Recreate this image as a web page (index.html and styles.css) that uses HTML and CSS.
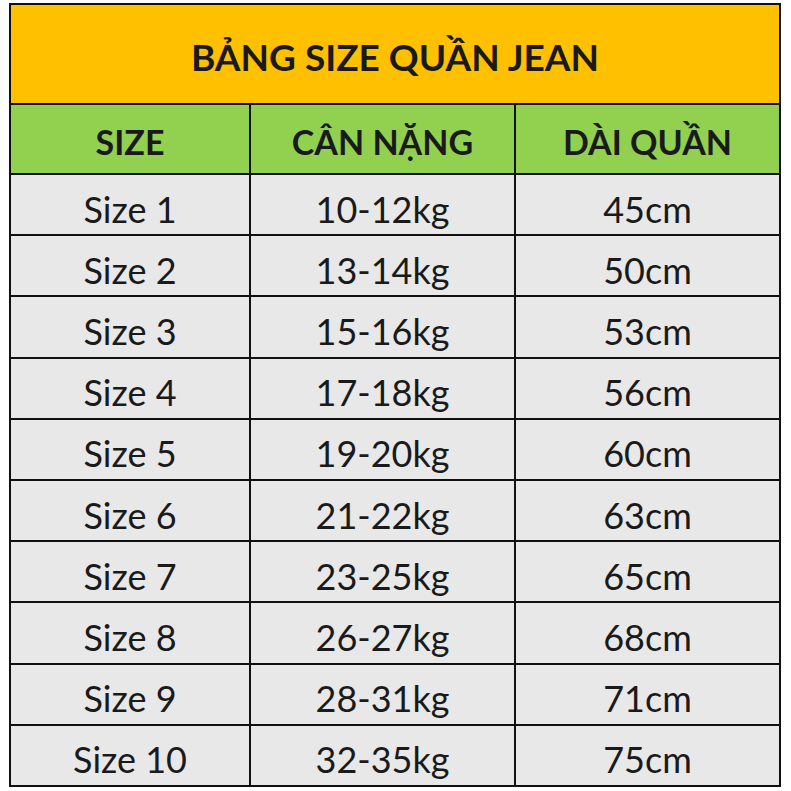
FILE: index.html
```html
<!DOCTYPE html>
<html lang="vi">
<head>
<meta charset="utf-8">
<title>Bảng size quần jean</title>
<link rel="stylesheet" href="styles.css">
</head>
<body>
<table class="size-table">
  <colgroup>
    <col class="c1"><col class="c2"><col class="c3">
  </colgroup>
  <tr class="title-row"><td colspan="3">BẢNG SIZE QUẦN JEAN</td></tr>
  <tr class="head-row"><td>SIZE</td><td>CÂN NẶNG</td><td>DÀI QUẦN</td></tr>
  <tr class="row"><td>Size 1</td><td>10-12kg</td><td>45cm</td></tr>
  <tr class="row"><td>Size 2</td><td>13-14kg</td><td>50cm</td></tr>
  <tr class="row"><td>Size 3</td><td>15-16kg</td><td>53cm</td></tr>
  <tr class="row"><td>Size 4</td><td>17-18kg</td><td>56cm</td></tr>
  <tr class="row"><td>Size 5</td><td>19-20kg</td><td>60cm</td></tr>
  <tr class="row"><td>Size 6</td><td>21-22kg</td><td>63cm</td></tr>
  <tr class="row"><td>Size 7</td><td>23-25kg</td><td>65cm</td></tr>
  <tr class="row"><td>Size 8</td><td>26-27kg</td><td>68cm</td></tr>
  <tr class="row"><td>Size 9</td><td>28-31kg</td><td>71cm</td></tr>
  <tr class="row"><td>Size 10</td><td>32-35kg</td><td>75cm</td></tr>
</table>
</body>
</html>
```
FILE: styles.css
```css
html, body {
  margin: 0;
  padding: 0;
  background: #ffffff;
}
body {
  padding: 3px 0 0 9px;
  font-family: Lato, "Open Sans", "Liberation Sans", sans-serif;
  color: #1a1a1a;
}
.size-table {
  border-collapse: collapse;
  width: 771px;
  table-layout: fixed;
}
.c1 { width: 240px; }
.c2 { width: 265px; }
.c3 { width: 265px; }
.size-table td {
  border: 2px solid #111111;
  text-align: center;
  padding: 0;
  line-height: 1;
  box-sizing: border-box;
}
.title-row td {
  height: 100px;
  background: #ffc000;
  font-weight: 700;
  font-size: 37px;
  padding-top: 4px;
}
.head-row td {
  height: 70px;
  background: #92d050;
  font-weight: 700;
  font-size: 34px;
  padding-top: 6px;
}
.row td {
  height: 61.2px;
  background: #e8e8e8;
  font-size: 36px;
  padding-top: 8px;
}
```
